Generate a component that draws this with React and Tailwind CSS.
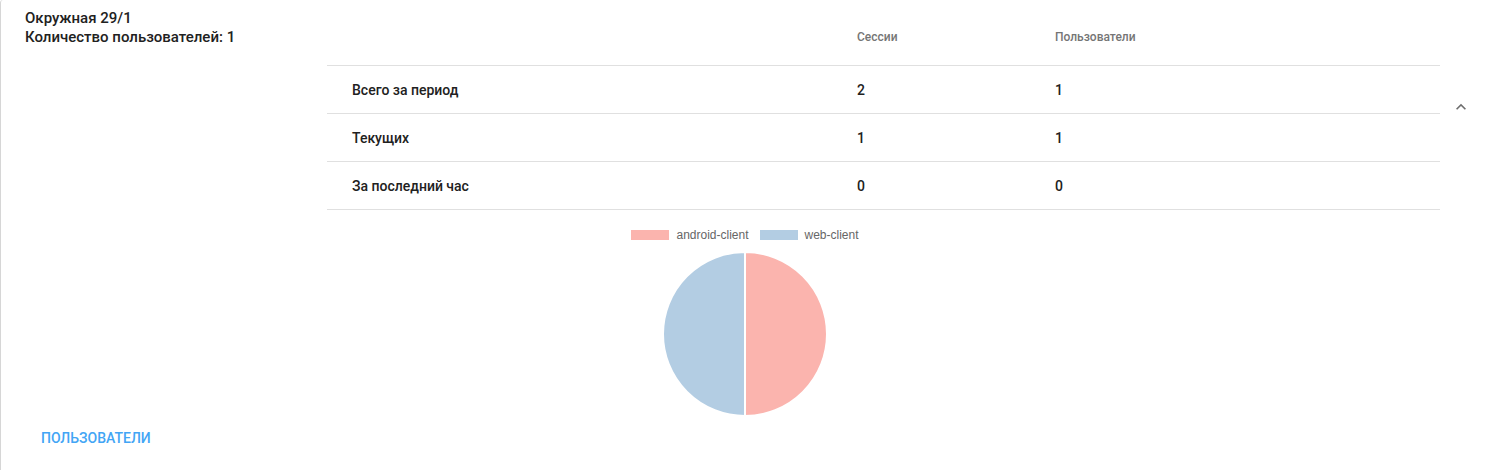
const rows = [
  { label: "Всего за период", sessions: 2, users: 1 },
  { label: "Текущих", sessions: 1, users: 1 },
  { label: "За последний час", sessions: 0, users: 0 },
];

function PieChart() {
  // two equal halves: android-client (right), web-client (left)
  return (
    <svg width="166" height="166" viewBox="0 0 166 166">
      <path d="M83 83 L83 1 A82 82 0 0 1 83 165 Z" fill="#fbb4ae" stroke="#fff" strokeWidth="2" />
      <path d="M83 83 L83 165 A82 82 0 0 1 83 1 Z" fill="#b3cde3" stroke="#fff" strokeWidth="2" />
    </svg>
  );
}

export default function App() {
  return (
    <div className="w-full h-[470px] bg-white overflow-hidden" style={{ fontFamily: "Roboto, 'Noto Sans', sans-serif" }}>
      <div className="flex h-[480px] bg-white border-l border-[#d6d6d6] rounded-tl-[3px]">
        {/* left column */}
        <div className="w-[326px] shrink-0 flex flex-col justify-between pl-[24px] pt-[9px] pb-[24px]">
          <div className="text-[15px] font-medium leading-[19px] text-[#212121]">
            <div>Окружная 29/1</div>
            <div>Количество пользователей: 1</div>
          </div>
          <button className="self-start h-9 px-4 text-sm font-medium uppercase text-[#42a5f5]">
            Пользователи
          </button>
        </div>

        {/* table + chart */}
        <div className="w-[1113px] shrink-0 pt-[9px]">
          <div className="grid grid-cols-[530px_198px_1fr] h-[57px] items-center border-b border-[#e0e0e0] text-xs font-medium text-[#757575]">
            <div />
            <div>Сессии</div>
            <div>Пользователи</div>
          </div>
          {rows.map((r) => (
            <div key={r.label} className="grid grid-cols-[530px_198px_1fr] h-12 items-center border-b border-[#e0e0e0] text-sm font-medium text-[#212121]">
              <div className="pl-[25px]">{r.label}</div>
              <div>{r.sessions}</div>
              <div>{r.users}</div>
            </div>
          ))}

          <div className="w-[836px] flex flex-col items-center">
            <div className="flex items-center gap-[7px] mt-[17px] text-xs text-[#666]" style={{ fontFamily: "'Liberation Sans', Arial, sans-serif" }}>
              <span className="w-[38px] h-[10px] bg-[#fbb4ae]" />
              <span className="mr-[4px]">android-client</span>
              <span className="w-[38px] h-[10px] bg-[#b3cde3]" />
              <span>web-client</span>
            </div>
            <div className="mt-[8px]">
              <PieChart />
            </div>
          </div>
        </div>

        {/* expand toggle */}
        <div className="flex-1 pt-[97px] pl-[11px]">
          <svg width="20" height="20" viewBox="0 0 24 24" fill="#6e6e6e">
            <path d="M12 8l-6 6 1.41 1.41L12 10.83l4.59 4.58L18 14z" />
          </svg>
        </div>
      </div>
    </div>
  );
}
